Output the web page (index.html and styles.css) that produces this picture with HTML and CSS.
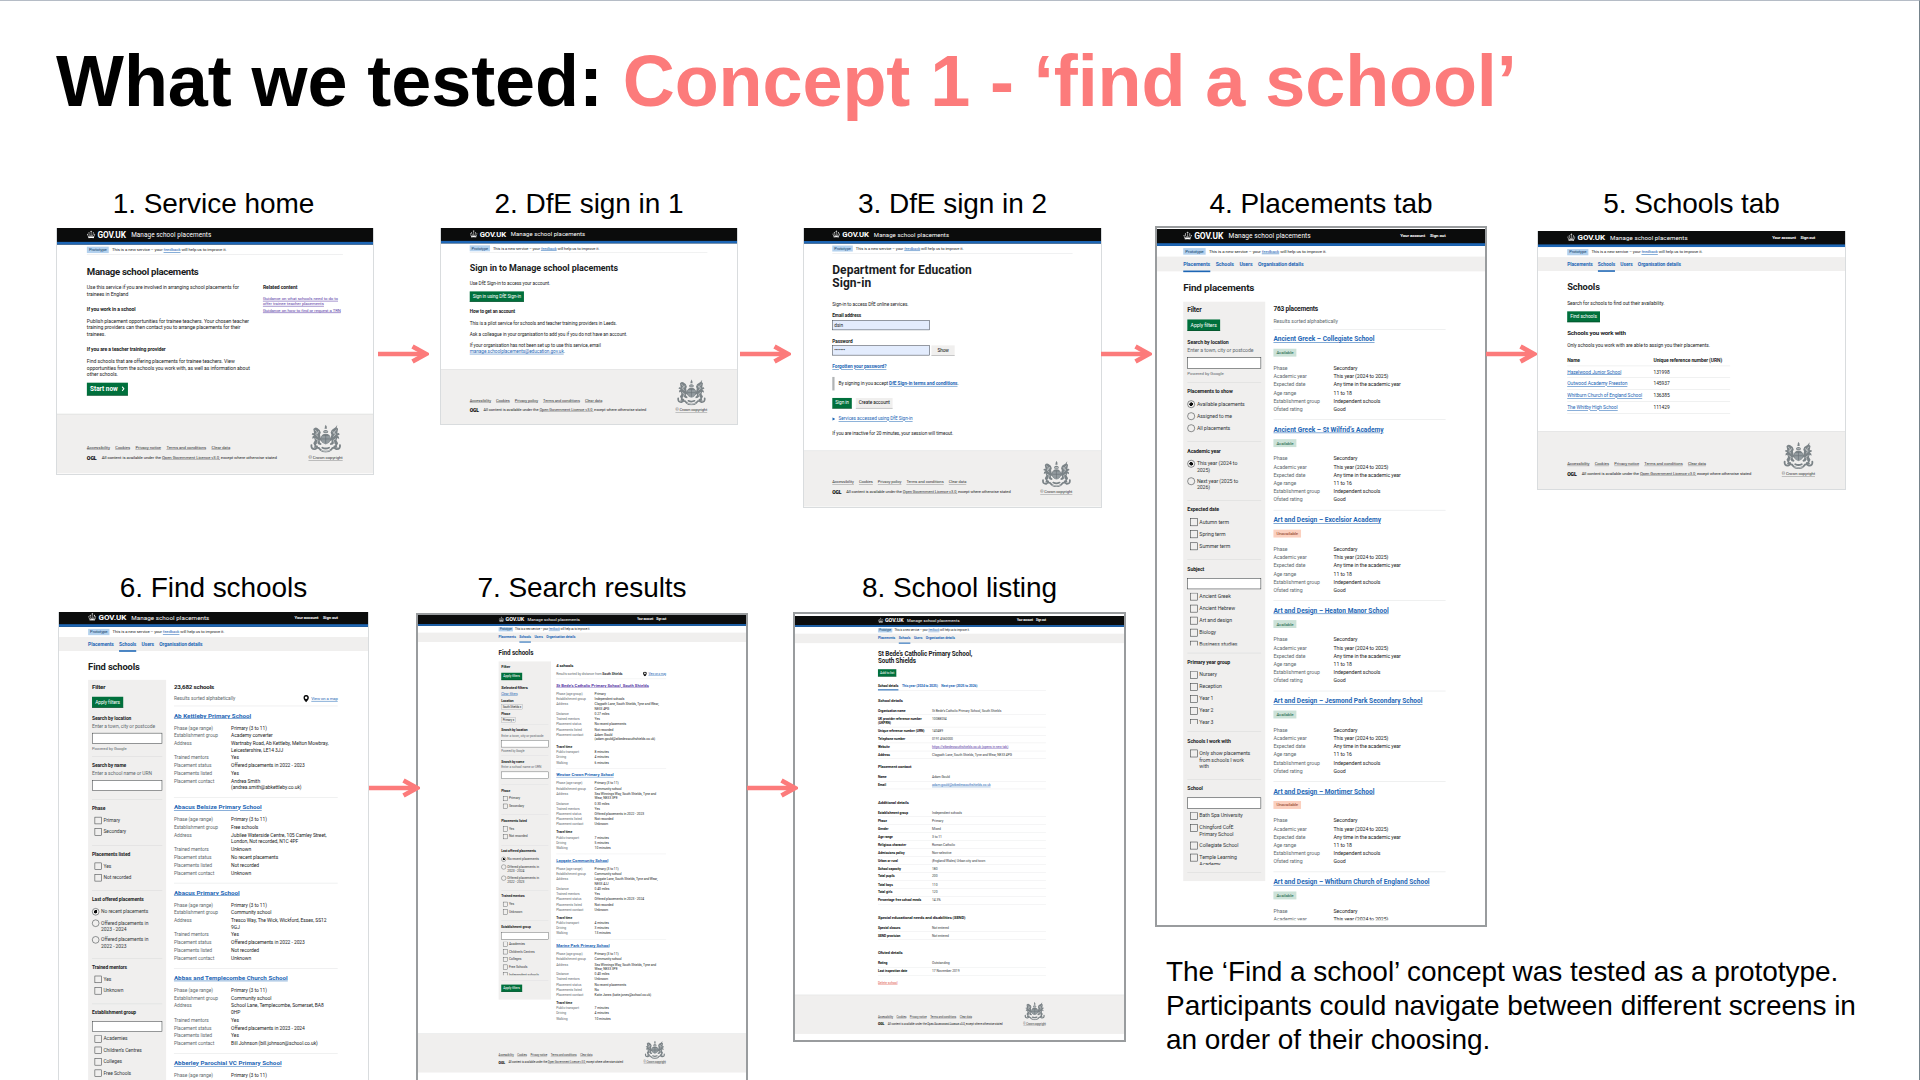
FILE: index.html
```html
<!DOCTYPE html>
<html lang="en">
<head>
<meta charset="utf-8">
<title>What we tested: Concept 1</title>
<link rel="stylesheet" href="styles.css">
</head>
<body>
<svg class="defs" aria-hidden="true">
  <symbol id="crown" viewBox="0 0 32 30">
    <g fill="#fff"><path d="M15 0h2v2.500h2.500v2H17V7h-2V4.500h-2.500v-2H15z"/><circle cx="8" cy="9" r="2"/><circle cx="24" cy="9" r="2"/><circle cx="2.600" cy="14.500" r="2"/><circle cx="29.400" cy="14.500" r="2"/>
    <path d="M16 7v14M8 11v5l5 4M24 11v5l-5 4M3 17l3 7M29 17l-3 7M5 23q11-3 22 0" fill="none" stroke="#fff" stroke-width="2"/><path d="M5 24.500q11-3 22 0l-.8 4.500q-10.200-1.500-20.400 0z"/></g>
  </symbol>
  <symbol id="crest" viewBox="0 0 125 104">
    <g fill="#7b8387">
      <path d="M53 24q9-10 19 0l-2 7H55z"/><path d="M58 15l2-9 3-3 3 3 1 9z"/><rect x="61.500" y="0" width="2.500" height="8"/>
      <path d="M16 16q7-9 15-4l9 7 4 10-3 8 3 12 6 6-1 7-9-4 1 8 6 5-2 5-9-2-5-6-5 7 5 7-3 4H17l4-7-5-10 6-11-3-9-7 3 1-8 6-4-9-4 3-5 6 1z"/>
      <path d="M109 15q-7-8-15-2l-9 6-4 10 3 8-3 12-6 6 1 7 9-4-1 8-6 5 2 5 9-2 5-6 5 7-5 7 3 4h11l-4-7 5-10-6-11 3-9 7 4-1-8-6-4 9-5-3-5-6 1z"/>
      <path d="M98 11l8-10-3 13z"/>
      <circle cx="62.500" cy="52" r="19"/>
    </g>
    <path d="M47 42h31v20q-5 10-15.500 12Q52 72 47 62z" fill="#929a9e"/>
    <path d="M62.500 38v32M48 53h29" stroke="#697277" stroke-width="2.500"/>
    <g fill="none" stroke="#7b8387" stroke-width="7" stroke-linecap="round">
      <path d="M9 76q-2 16 13 15 8-2 8-10M116 76q2 16-13 15-8-2-8-10M32 86q6 0 10 7 8 8 20.500 8T83 93q4-7 10-7M50 86q12 6 25 0"/>
    </g>
    <g fill="none" stroke="#e4e6e6" stroke-width="2.200">
      <path d="M22 19l9 8-6 9 9 8M24 52l10 6-4 11M103 19l-9 8 6 9-9 8M101 52l-10 6 4 11M57 26h12M36 24l-6 12M89 24l6 12M45 96q17 9 35 0"/>
    </g>
  </symbol>
  <symbol id="pin" viewBox="0 0 24 30"><path fill="#0b0c0c" fill-rule="evenodd" d="M12 0C5 0 1 5 1 11c0 7 7 13 11 19 4-6 11-12 11-19C23 5 19 0 12 0zm0 6a5 5 0 110 10 5 5 0 010-10z"/></symbol>
  <symbol id="arrow" viewBox="0 0 52 20" preserveAspectRatio="xMaxYMid slice"><path d="M0 10h48" stroke="#fc7b7b" stroke-width="4.700"/><path d="M35.500 2.500L49 10l-13.500 7.500" fill="none" stroke="#fc7b7b" stroke-width="4.700"/></symbol>
</svg>

<main class="slide">
<h1 class="title">What we tested: <span>Concept 1 - ‘find a school’</span></h1>

<figure class="node n1"><figcaption>1. Service home</figcaption>
<div class="shot"><div class="page">
  <div class="top"><svg><use href="#crown"/></svg><b>GOV.UK</b><span>Manage school placements</span></div>
  <div class="phase ruled"><i>Prototype</i><span>This is a new service – your <a>feedback</a> will help us to improve it.</span></div>
  <div class="main home">
    <div>
      <h2 class="xl">Manage school placements</h2>
      <p class="lead">Use this service if you are involved in arranging school placements for<br>trainees in England</p>
      <h4>If you work in a school</h4>
      <p>Publish placement opportunities for trainee teachers. Your chosen teacher<br>training providers can then contact you to arrange placements for their<br>trainees.</p>
      <h4>If you are a teacher training provider</h4>
      <p>Find schools that are offering placements for trainee teachers. View<br>opportunities from the schools you work with, as well as information about<br>other schools.</p>
      <span class="btn start">Start now <svg viewBox="0 0 12 20"><path d="M2 2l7 8-7 8" fill="none" stroke="#fff" stroke-width="4"/></svg></span>
    </div>
    <aside><h4>Related content</h4><a>Guidance on what schools need to do to<br>offer trainee teacher placements</a><a>Guidance on how to find or request a TRN</a></aside>
  </div>
  <div class="foot"><div class="meta"><p><a>Accessibility</a><a>Cookies</a><a>Privacy notice</a><a>Terms and conditions</a><a>Clear data</a></p><p class="ogl"><b>OGL</b><span>All content is available under the <u>Open Government Licence v3.0</u>, except where otherwise stated</span></p></div><div class="arms"><svg><use href="#crest"/></svg><a>© Crown copyright</a></div></div>
</div></div></figure>

<figure class="node n2"><figcaption>2. DfE sign in 1</figcaption>
<div class="shot"><div class="page">
  <div class="top"><svg><use href="#crown"/></svg><b>GOV.UK</b><span>Manage school placements</span></div>
  <div class="phase ruled"><i>Prototype</i><span>This is a new service – your <a>feedback</a> will help us to improve it.</span></div>
  <div class="main signin">
    <h2 class="xl">Sign in to Manage school placements</h2>
    <p>Use DfE Sign-in to access your account.</p>
    <span class="btn">Sign in using DfE Sign-in</span>
    <h4>How to get an account</h4>
    <p>This is a pilot service for schools and teacher training providers in Leeds.</p>
    <p>Ask a colleague in your organisation to add you if you do not have an account.</p>
    <p>If your organisation has not been set up to use this service, email<br><a>manage.schoolplacements@education.gov.uk</a>.</p>
  </div>
  <div class="foot"><div class="meta"><p><a>Accessibility</a><a>Cookies</a><a>Privacy policy</a><a>Terms and conditions</a><a>Clear data</a></p><p class="ogl"><b>OGL</b><span>All content is available under the <u>Open Government Licence v3.0</u>, except where otherwise stated</span></p></div><div class="arms"><svg><use href="#crest"/></svg><a>© Crown copyright</a></div></div>
</div></div></figure>

<figure class="node n3"><figcaption>3. DfE sign in 2</figcaption>
<div class="shot"><div class="page">
  <div class="top"><svg><use href="#crown"/></svg><b>GOV.UK</b><span>Manage school placements</span></div>
  <div class="phase ruled"><i>Prototype</i><span>This is a new service – your <a>feedback</a> will help us to improve it.</span></div>
  <div class="main dfe">
    <h2 class="xxl">Department for Education<br>Sign-in</h2>
    <p>Sign-in to access DfE online services.</p>
    <h4>Email address</h4>
    <div class="field"><span class="filled">dsin</span></div>
    <h4>Password</h4>
    <div class="field"><span class="filled">•••••••</span><span class="btn grey">Show</span></div>
    <p class="forgot"><a>Forgotten your password?</a></p>
    <p class="inset">By signing in you accept <a>DfE Sign-in terms and conditions</a>.</p>
    <div class="pair"><span class="btn">Sign in</span><span class="btn grey">Create account</span></div>
    <p class="more"><svg viewBox="0 0 12 14"><path d="M0 0l12 7-12 7z" fill="#1d66b5"/></svg><a>Services accessed using DfE Sign-in</a></p>
    <p>If you are inactive for 20 minutes, your session will timeout.</p>
  </div>
  <div class="foot"><div class="meta"><p><a>Accessibility</a><a>Cookies</a><a>Privacy policy</a><a>Terms and conditions</a><a>Clear data</a></p><p class="ogl"><b>OGL</b><span>All content is available under the <u>Open Government Licence v3.0</u>, except where otherwise stated</span></p></div><div class="arms"><svg><use href="#crest"/></svg><a>© Crown copyright</a></div></div>
</div></div></figure>

<figure class="node n4 framed"><figcaption>4. Placements tab</figcaption>
<div class="shot"><div class="page">
  <div class="top"><svg><use href="#crown"/></svg><b>GOV.UK</b><span>Manage school placements</span><em>Your account</em><em>Sign out</em></div>
  <div class="phase"><i>Prototype</i><span>This is a new service – your <a>feedback</a> will help us to improve it.</span></div>
  <div class="nav"><a class="on">Placements</a><a>Schools</a><a>Users</a><a>Organisation details</a></div>
  <div class="main">
    <h2 class="xl">Find placements</h2>
    <div class="cols">
      <div class="filter">
        <h3>Filter</h3><span class="btn">Apply filters</span>
        <section class="search first"><h4>Search by location</h4><p>Enter a town, city or postcode</p><div class="box"></div><small>Powered by Google</small></section>
        <section><h4>Placements to show</h4><ul class="radio"><li class="on">Available placements<li>Assigned to me<li>All placements</ul></section>
        <section><h4>Academic year</h4><ul class="radio"><li class="on">This year (2024 to<br>2025)<li>Next year (2025 to<br>2026)</ul></section>
        <section><h4>Expected date</h4><ul><li>Autumn term<li>Spring term<li>Summer term</ul></section>
        <section><h4>Subject</h4><div class="box"></div><ul class="scroll"><li>Ancient Greek<li>Ancient Hebrew<li>Art and design<li>Biology<li>Business studies</ul></section>
        <section><h4>Primary year group</h4><ul class="scroll"><li>Nursery<li>Reception<li>Year 1<li>Year 2<li>Year 3</ul></section>
        <section><h4>Schools I work with</h4><ul><li>Only show placements<br>from schools I work<br>with</ul></section>
        <section><h4>School</h4><div class="box"></div><ul class="scroll"><li>Bath Spa University<li>Chingford CofE<br>Primary School<li>Collegiate School<li>Temple Learning<br>Academy</ul></section>
      </div>
      <div class="results">
        <h3>763 placements</h3><p class="sort">Results sorted alphabetically</p>
        <article><h5>Ancient Greek – Collegiate School</h5><i class="tag">Available</i><dl><dt>Phase<dd>Secondary<dt>Academic year<dd>This year (2024 to 2025)<dt>Expected date<dd>Any time in the academic year<dt>Age range<dd>11 to 18<dt>Establishment group<dd>Independent schools<dt>Ofsted rating<dd>Good</dl></article>
        <article><h5>Ancient Greek – St Wilfrid’s Academy</h5><i class="tag">Available</i><dl><dt>Phase<dd>Secondary<dt>Academic year<dd>This year (2024 to 2025)<dt>Expected date<dd>Any time in the academic year<dt>Age range<dd>11 to 16<dt>Establishment group<dd>Independent schools<dt>Ofsted rating<dd>Good</dl></article>
        <article><h5>Art and Design – Excelsior Academy</h5><i class="tag no">Unavailable</i><dl><dt>Phase<dd>Secondary<dt>Academic year<dd>This year (2024 to 2025)<dt>Expected date<dd>Any time in the academic year<dt>Age range<dd>11 to 18<dt>Establishment group<dd>Independent schools<dt>Ofsted rating<dd>Good</dl></article>
        <article><h5>Art and Design – Heaton Manor School</h5><i class="tag">Available</i><dl><dt>Phase<dd>Secondary<dt>Academic year<dd>This year (2024 to 2025)<dt>Expected date<dd>Any time in the academic year<dt>Age range<dd>11 to 18<dt>Establishment group<dd>Independent schools<dt>Ofsted rating<dd>Good</dl></article>
        <article><h5>Art and Design – Jesmond Park Secondary School</h5><i class="tag">Available</i><dl><dt>Phase<dd>Secondary<dt>Academic year<dd>This year (2024 to 2025)<dt>Expected date<dd>Any time in the academic year<dt>Age range<dd>11 to 16<dt>Establishment group<dd>Independent schools<dt>Ofsted rating<dd>Good</dl></article>
        <article><h5>Art and Design – Mortimer School</h5><i class="tag no">Unavailable</i><dl><dt>Phase<dd>Secondary<dt>Academic year<dd>This year (2024 to 2025)<dt>Expected date<dd>Any time in the academic year<dt>Age range<dd>11 to 18<dt>Establishment group<dd>Independent schools<dt>Ofsted rating<dd>Good</dl></article>
        <article><h5>Art and Design – Whitburn Church of England School</h5><i class="tag">Available</i><dl><dt>Phase<dd>Secondary<dt>Academic year<dd>This year (2024 to 2025)</dl></article>
      </div>
    </div>
  </div>
</div></div></figure>

<figure class="node n5"><figcaption>5. Schools tab</figcaption>
<div class="shot"><div class="page">
  <div class="top"><svg><use href="#crown"/></svg><b>GOV.UK</b><span>Manage school placements</span><em>Your account</em><em>Sign out</em></div>
  <div class="phase"><i>Prototype</i><span>This is a new service – your <a>feedback</a> will help us to improve it.</span></div>
  <div class="nav"><a>Placements</a><a class="on">Schools</a><a>Users</a><a>Organisation details</a></div>
  <div class="main schools">
    <h2 class="xl">Schools</h2>
    <p>Search for schools to find out their availability.</p>
    <span class="btn">Find schools</span>
    <h3>Schools you work with</h3>
    <p>Only schools you work with are able to assign you their placements.</p>
    <dl class="table"><dt>Name<dd>Unique reference number (URN)<dt><a>Hazelwood Junior School</a><dd>131998<dt><a>Outwood Academy Freeston</a><dd>145937<dt><a>Whitburn Church of England School</a><dd>136385<dt><a>The Whitby High School</a><dd>111429</dl>
  </div>
  <div class="foot"><div class="meta"><p><a>Accessibility</a><a>Cookies</a><a>Privacy notice</a><a>Terms and conditions</a><a>Clear data</a></p><p class="ogl"><b>OGL</b><span>All content is available under the <u>Open Government Licence v3.0</u>, except where otherwise stated</span></p></div><div class="arms"><svg><use href="#crest"/></svg><a>© Crown copyright</a></div></div>
</div></div></figure>

<figure class="node n6"><figcaption>6. Find schools</figcaption>
<div class="shot"><div class="page">
  <div class="top"><svg><use href="#crown"/></svg><b>GOV.UK</b><span>Manage school placements</span><em>Your account</em><em>Sign out</em></div>
  <div class="phase"><i>Prototype</i><span>This is a new service – your <a>feedback</a> will help us to improve it.</span></div>
  <div class="nav"><a>Placements</a><a class="on">Schools</a><a>Users</a><a>Organisation details</a></div>
  <div class="main">
    <h2 class="xl">Find schools</h2>
    <div class="cols">
      <div class="filter">
        <h3>Filter</h3><span class="btn">Apply filters</span>
        <section class="search first"><h4>Search by location</h4><p>Enter a town, city or postcode</p><div class="box"></div><small>Powered by Google</small></section>
        <section class="search"><h4>Search by name</h4><p>Enter a school name or URN</p><div class="box"></div></section>
        <section><h4>Phase</h4><ul><li>Primary<li>Secondary</ul></section>
        <section><h4>Placements listed</h4><ul><li>Yes<li>Not recorded</ul></section>
        <section><h4>Last offered placements</h4><ul class="radio"><li class="on">No recent placements<li>Offered placements in<br>2023 - 2024<li>Offered placements in<br>2022 - 2023</ul></section>
        <section><h4>Trained mentors</h4><ul><li>Yes<li>Unknown</ul></section>
        <section><h4>Establishment group</h4><div class="box"></div><ul class="scroll"><li>Academies<li>Children’s Centres<li>Colleges<li>Free Schools</ul></section>
      </div>
      <div class="results">
        <h3>23,682 schools</h3><p class="sort">Results sorted alphabetically<span class="map"><svg><use href="#pin"/></svg><a>View on a map</a></span></p>
        <article><h5>Ab Kettleby Primary School</h5><dl><dt>Phase (age range)<dd>Primary (3 to 11)<dt>Establishment group<dd>Academy converter<dt>Address<dd>Wartnaby Road, Ab Kettleby, Melton Mowbray,<br>Leicestershire, LE14 3JJ<dt>Trained mentors<dd>Yes<dt>Placement status<dd>Offered placements in 2022 - 2023<dt>Placements listed<dd>Yes<dt>Placement contact<dd>Andrea Smith<br>(andrea.smith@abkettleby.co.uk)</dl></article>
        <article><h5>Abacus Belsize Primary School</h5><dl><dt>Phase (age range)<dd>Primary (3 to 11)<dt>Establishment group<dd>Free schools<dt>Address<dd>Jubilee Waterside Centre, 105 Camley Street,<br>London, Not recorded, N1C 4PF<dt>Trained mentors<dd>Unknown<dt>Placement status<dd>No recent placements<dt>Placements listed<dd>Not recorded<dt>Placement contact<dd>Unknown</dl></article>
        <article><h5>Abacus Primary School</h5><dl><dt>Phase (age range)<dd>Primary (3 to 11)<dt>Establishment group<dd>Community school<dt>Address<dd>Tresco Way, The Wick, Wickford, Essex, SS12<br>9GJ<dt>Trained mentors<dd>Yes<dt>Placement status<dd>Offered placements in 2022 - 2023<dt>Placements listed<dd>Not recorded<dt>Placement contact<dd>Unknown</dl></article>
        <article><h5>Abbas and Templecombe Church School</h5><dl><dt>Phase (age range)<dd>Primary (3 to 11)<dt>Establishment group<dd>Community school<dt>Address<dd>School Lane, Templecombe, Somerset, BA8<br>0HP<dt>Trained mentors<dd>Yes<dt>Placement status<dd>Offered placements in 2023 - 2024<dt>Placements listed<dd>Yes<dt>Placement contact<dd>Bill Johnson (bill.johnson@school.co.uk)</dl></article>
        <article><h5>Abberley Parochial VC Primary School</h5><dl><dt>Phase (age range)<dd>Primary (3 to 11)</dl></article>
      </div>
    </div>
  </div>
</div></div></figure>

<figure class="node n7 framed"><figcaption>7. Search results</figcaption>
<div class="shot"><div class="page">
  <div class="top"><svg><use href="#crown"/></svg><b>GOV.UK</b><span>Manage school placements</span><em>Your account</em><em>Sign out</em></div>
  <div class="phase"><i>Prototype</i><span>This is a new service – your <a>feedback</a> will help us to improve it.</span></div>
  <div class="nav"><a>Placements</a><a class="on">Schools</a><a>Users</a><a>Organisation details</a></div>
  <div class="main">
    <h2 class="xl">Find schools</h2>
    <div class="cols">
      <div class="filter">
        <h3>Filter</h3><span class="btn">Apply filters</span>
        <div class="chosen"><h3>Selected filters</h3><a>Clear filters</a><h4>Location</h4><span>South Shields ×</span><h4>Phase</h4><span>Primary ×</span></div>
        <section class="search"><h4>Search by location</h4><p>Enter a town, city or postcode</p><div class="box"></div><small>Powered by Google</small></section>
        <section class="search"><h4>Search by name</h4><p>Enter a school name or URN</p><div class="box"></div></section>
        <section><h4>Phase</h4><ul><li>Primary<li>Secondary</ul></section>
        <section><h4>Placements listed</h4><ul><li>Yes<li>Not recorded</ul></section>
        <section><h4>Last offered placements</h4><ul class="radio"><li class="on">No recent placements<li>Offered placements in<br>2023 - 2024<li>Offered placements in<br>2022 - 2023</ul></section>
        <section><h4>Trained mentors</h4><ul><li>Yes<li>Unknown</ul></section>
        <section><h4>Establishment group</h4><div class="box"></div><ul class="scroll"><li>Academies<li>Children’s Centres<li>Colleges<li>Free Schools<li>Independent schools</ul></section>
        <span class="btn last">Apply filters</span>
      </div>
      <div class="results">
        <h3>4 schools</h3><p class="sort">Results sorted by distance from <b>South Shields</b><span class="map"><svg><use href="#pin"/></svg><a>View on a map</a></span></p>
        <article><h5 class="seen">St Bede’s Catholic Primary School, South Shields</h5><dl><dt>Phase (age group)<dd>Primary<dt>Establishment group<dd>Independent schools<dt>Address<dd>Claypath Lane, South Shields, Tyne and Wear,<br>NE33 4PG<dt>Distance<dd>0.27 miles<dt>Trained mentors<dd>Yes<dt>Placement status<dd>No recent placements<dt>Placements listed<dd>Not recorded<dt>Placement contact<dd>Adam Gould<br>(adam.gould@stbedessouthshields.co.uk)</dl><h4>Travel time</h4><dl><dt>Public transport<dd>8 minutes<dt>Driving<dd>4 minutes<dt>Walking<dd>6 minutes</dl></article>
        <article><h5>Westoe Crown Primary School</h5><dl><dt>Phase (age range)<dd>Primary (3 to 11)<dt>Establishment group<dd>Community school<dt>Address<dd>Sea Winnings Way, South Shields, Tyne and<br>Wear, NE33 3PE<dt>Distance<dd>0.30 miles<dt>Trained mentors<dd>Yes<dt>Placement status<dd>Offered placements in 2022 - 2023<dt>Placements listed<dd>Not recorded<dt>Placement contact<dd>Unknown</dl><h4>Travel time</h4><dl><dt>Public transport<dd>7 minutes<dt>Driving<dd>5 minutes<dt>Walking<dd>10 minutes</dl></article>
        <article><h5>Laygate Community School</h5><dl><dt>Phase (age range)<dd>Primary (3 to 11)<dt>Establishment group<dd>Community school<dt>Address<dd>Laygate Lane, South Shields, Tyne and Wear,<br>NE33 4JJ<dt>Distance<dd>0.40 miles<dt>Trained mentors<dd>Yes<dt>Placement status<dd>Offered placements in 2023 - 2024<dt>Placements listed<dd>Not recorded<dt>Placement contact<dd>Unknown</dl><h4>Travel time</h4><dl><dt>Public transport<dd>4 minutes<dt>Driving<dd>3 minutes<dt>Walking<dd>13 minutes</dl></article>
        <article><h5>Marine Park Primary School</h5><dl><dt>Phase (age group)<dd>Primary (3 to 11)<dt>Establishment group<dd>Community school<dt>Address<dd>Sea Winnings Way, South Shields, Tyne and<br>Wear, NE33 3PE<dt>Distance<dd>0.40 miles<dt>Trained mentors<dd>Unknown<dt>Placement status<dd>No recent placements<dt>Placements listed<dd>No<dt>Placement contact<dd>Katie Jones (katie.jones@school.co.uk)</dl><h4>Travel time</h4><dl><dt>Public transport<dd>7 minutes<dt>Driving<dd>4 minutes<dt>Walking<dd>10 minutes</dl></article>
      </div>
    </div>
  </div>
  <div class="foot"><div class="meta"><p><a>Accessibility</a><a>Cookies</a><a>Privacy notice</a><a>Terms and conditions</a><a>Clear data</a></p><p class="ogl"><b>OGL</b><span>All content is available under the <u>Open Government Licence v3.0</u>, except where otherwise stated</span></p></div><div class="arms"><svg><use href="#crest"/></svg><a>© Crown copyright</a></div></div>
</div></div></figure>

<figure class="node n8 framed"><figcaption>8. School listing</figcaption>
<div class="shot"><div class="page">
  <div class="top"><svg><use href="#crown"/></svg><b>GOV.UK</b><span>Manage school placements</span><em>Your account</em><em>Sign out</em></div>
  <div class="phase"><i>Prototype</i><span>This is a new service – your <a>feedback</a> will help us to improve it.</span></div>
  <div class="nav"><a>Placements</a><a class="on">Schools</a><a>Users</a><a>Organisation details</a></div>
  <div class="main listing">
    <h2 class="xl">St Bede’s Catholic Primary School,<br>South Shields</h2>
    <span class="btn">Add to list</span>
    <div class="tabs"><a class="on">School details</a><a>This year (2024 to 2025)</a><a>Next year (2025 to 2026)</a></div>
    <h3>School details</h3>
    <dl class="sum"><dt>Organisation name<dd>St Bede’s Catholic Primary School, South Shields<dt>UK provider reference number<br>(UKPRN)<dd>10088034<dt>Unique reference number (URN)<dd>140489<dt>Telephone number<dd>0191 4560000<dt>Website<dd><a class="seen">https://stbedessouthshields.co.uk (opens in new tab)</a><dt>Address<dd>Claypath Lane, South Shields, Tyne and Wear, NE33 4PG</dl>
    <h3>Placement contact</h3>
    <dl class="sum"><dt>Name<dd>Adam Gould<dt>Email<dd><a>adam.gould@stbedessouthshields.co.uk</a></dl>
    <h3 class="gap">Additional details</h3>
    <dl class="sum"><dt>Establishment group<dd>Independent schools<dt>Phase<dd>Primary<dt>Gender<dd>Mixed<dt>Age range<dd>3 to 11<dt>Religious character<dd>Roman Catholic<dt>Admissions policy<dd>Non-selective<dt>Urban or rural<dd>(England/Wales) Urban city and town<dt>School capacity<dd>180<dt>Total pupils<dd>200<dt>Total boys<dd>110<dt>Total girls<dd>120<dt>Percentage free school meals<dd>14.3%</dl>
    <h3 class="gap">Special educational needs and disabilities (SEND)</h3>
    <dl class="sum"><dt>Special classes<dd>Not entered<dt>SEND provision<dd>Not entered</dl>
    <h3 class="gap">Ofsted details</h3>
    <dl class="sum"><dt>Rating<dd>Outstanding<dt>Last inspection date<dd>17 November 2019</dl>
    <p class="delete"><a>Delete school</a></p>
  </div>
  <div class="foot"><div class="meta"><p><a>Accessibility</a><a>Cookies</a><a>Privacy notice</a><a>Terms and conditions</a><a>Clear data</a></p><p class="ogl"><b>OGL</b><span>All content is available under the <u>Open Government Licence v3.0</u>, except where otherwise stated</span></p></div><div class="arms"><svg><use href="#crest"/></svg><a>© Crown copyright</a></div></div>
</div></div></figure>

<svg class="arrow a1"><use href="#arrow"/></svg>
<svg class="arrow a2"><use href="#arrow"/></svg>
<svg class="arrow a3"><use href="#arrow"/></svg>
<svg class="arrow a4"><use href="#arrow"/></svg>
<svg class="arrow a5"><use href="#arrow"/></svg>
<svg class="arrow a6"><use href="#arrow"/></svg>

<p class="note">The ‘Find a school’ concept was tested as a prototype.<br>Participants could navigate between different screens in<br>an order of their choosing.</p>
</main>
</body>
</html>
```
FILE: styles.css
```css
* { box-sizing: border-box; margin: 0; padding: 0; }
body { width: 1920px; height: 1080px; overflow: hidden; background: #fff; color: #000; font-family: "Liberation Sans", Arial, sans-serif; }
.defs { display: none; }
.slide { position: relative; width: 1920px; height: 1080px; overflow: hidden; border-top: 1px solid #b5bcc6; border-right: 1px solid #75838b; }
.title { padding: 39px 0 0 56px; font-size: 72px; line-height: 82px; font-weight: 700; letter-spacing: -.08px; white-space: nowrap; }
.title span { color: #fc7b7b; }
.note { position: absolute; left: 1166px; top: 954px; font-size: 28px; line-height: 34px; letter-spacing: -.04px; white-space: nowrap; }

/* Flow diagram: screens and the arrows that join them */
.node { position: absolute; top: 187px; width: var(--w); }
.node figcaption { height: var(--cap, 40px); font-size: 28px; line-height: 32px; letter-spacing: -.06px; text-align: center; white-space: nowrap; }
.shot { width: var(--w); height: var(--h); overflow: hidden; background: #fff; border: 1px solid #d9dcde; border-top: 0; }
.framed .shot { border: 2px solid #999c9e; background: #fff; }
.n1 { --w: 318px; --h: 247px; --s: .2667; --pad: 112px; left: 56px; }
.n1 figcaption { text-indent: -3px; }
.n2 { --w: 298px; --h: 197px; --s: .2476; --pad: 116px; left: 440px; }
.n3 { --w: 299px; --h: 280px; --s: .2503; --pad: 113px; left: 803px; }
.n4 { --w: 332px; --h: 701px; --s: .2733; --pad: 96px; --cap: 38px; left: 1155px; }
.n5 { --w: 309px; --h: 259px; --s: .2583; --pad: 113px; --cap: 43px; left: 1537px; }
.n6 { --w: 311px; --h: 480px; --s: .26; --pad: 112px; left: 58px; top: 571px; }
.n7 { --w: 332px; --h: 480px; --s: .1745; --pad: 462px; --cap: 41px; left: 416px; top: 571px; }
.n8 { --w: 333px; --h: 430px; --s: .175; --pad: 474px; left: 793px; top: 571px; }
.n4 .shot { padding-top: 1px; }
.n4 .page { height: 2529px; overflow: hidden; }
.n8 .shot { padding-top: 2px; }
.arrow { position: absolute; width: 51px; height: 20px; top: 343px; }
.a1 { left: 378px; }
.a2 { left: 740px; }
.a3 { left: 1101px; }
.a4 { left: 1486px; }
.a5 { left: 369px; top: 777px; }
.a6 { left: 747px; top: 777px; }

/* Service pages, drawn at their own size and scaled down */
.page { width: calc(var(--w) / var(--s)); transform: scale(var(--s)); transform-origin: 0 0; background: #fff; color: #1a1c1d; font: 19px/25px Roboto, "Liberation Sans", sans-serif; letter-spacing: -.013em; white-space: nowrap; }
.page a { color: #1d66b5; text-decoration: underline; text-decoration-thickness: 1.5px; text-underline-offset: 3px; }
.top, .phase, .nav, .main, .foot { padding-left: var(--pad); padding-right: calc(var(--w) / var(--s) - var(--pad) - 960px); }
.top { display: flex; align-items: flex-end; height: var(--bar, 62px); background: #0b0c0c; border-bottom: 10px solid #1d66b5; color: #fff; }
.n6 .top { --bar: 57px; overflow: hidden; }
.top svg { width: 32px; height: 30px; margin: 0 8px 13px 0; }
.top b { width: 126px; font-size: 31px; line-height: 36px; padding-bottom: 8px; letter-spacing: -.01em; }
.top span { flex: 1; font-size: 24px; line-height: 36px; padding-bottom: 8px; letter-spacing: .01em; }
.top em { margin-left: 18px; font-size: 16px; font-style: normal; font-weight: 700; line-height: 36px; padding-bottom: 9px; letter-spacing: -.02em; }
.phase { display: flex; align-items: center; height: 39px; font-size: 16px; }
.phase i { width: 82px; margin-right: 12px; text-align: center; font-style: normal; line-height: 24px; background: #b3d1ee; color: #123c66; }
.ruled { background: linear-gradient(#c4c7c9, #c4c7c9) var(--pad) bottom / 960px 1.500px no-repeat; }
.nav { display: flex; gap: 20px; height: 54px; background: #f0efee; line-height: 54px; font-weight: 700; }
.page .nav a { text-decoration: none; }
.nav a.on { border-bottom: 6px solid #1d66b5; height: 57px; }
.xl { font-size: 36px; line-height: 40px; letter-spacing: -.014em; }
.n1 .xl { letter-spacing: -.03em; }
.n2 .xl { letter-spacing: -.005em; }
.xxl { font-size: 48px; line-height: 50px; letter-spacing: .002em; }
.page h3 { font-size: 24px; line-height: 30px; letter-spacing: -.03em; }
.page h4 { font-size: 19px; line-height: 25px; letter-spacing: -.02em; }
.btn { display: block; width: fit-content; height: 42px; padding: 0 12px; background: #00703c; border-bottom: 2px solid #00401f; color: #fff; line-height: 39px; letter-spacing: -.02em; }
.btn.grey { background: #f0efee; border-color: #9a9c9d; color: #0b0c0c; }

/* Footer */
.foot { display: flex; justify-content: space-between; height: 223px; background: #f0efee; border-top: 1.500px solid #b9bdc0; font-size: 16px; line-height: 20px; }
.foot a, .foot u { color: #303335; text-decoration-thickness: 1px; }
.meta p { display: flex; gap: 20px; padding-top: 114px; }
.meta .ogl { padding-top: 20px; gap: 14px; }
.ogl b { width: 42px; font-size: 20px; font-weight: 900; letter-spacing: -.03em; color: #0b0c0c; }
.arms { width: 130px; padding-top: 40px; text-align: center; }
.arms svg { display: block; width: 125px; height: 104px; margin: 0 auto 10px; }

/* Service home */
.home { display: flex; gap: 0; height: 596px; padding-top: 43px; }
.home > div { width: 660px; }
.home .lead { margin: 27px 0 30px; }
.home h4 + p { margin: 20px 0 31px; }
.start.btn { display: flex; align-items: center; gap: 14px; margin-top: -13px; height: 48px; font-size: 24px; font-weight: 700; letter-spacing: 0; }
.start svg { width: 12px; height: 20px; }
.home aside { padding-top: 66px; font-size: 16px; line-height: 19px; letter-spacing: -.005em; }
.page .home aside a { display: block; margin-top: 6px; color: #5a3aa6; }
.page .home aside h4 { margin-bottom: 20px; }

/* Sign in, step 1 */
.signin { height: 470px; padding-top: 42px; }
.signin p { margin-bottom: 20px; }
.signin h2 { margin-bottom: 28px; }
.signin h4 { margin: 28px 0 20px; }

/* Sign in, step 2 */
.dfe { height: 789px; padding-top: 43px; }
.dfe > p:first-of-type { margin: 50px 0 19px; }
.field { display: flex; gap: 6px; margin: 5px 0 31px; }
.filled { width: 390px; height: 40px; border: 2px solid #3c4046; background: #e3ecfd; padding: 0 6px; line-height: 38px; }
.dfe .grey { padding: 0 24px; }
.forgot, .inset a { font-weight: 700; }
.inset { margin: 28px 0 30px; padding-left: 16px; border-left: 9px solid #b1b4b6; line-height: 54px; }
.pair { display: flex; gap: 16px; }
.dfe .pair .grey { padding: 0 12px; }
.more { display: flex; align-items: center; gap: 13px; margin: 29px 0 35px; }
.more svg { width: 12px; height: 14px; }

/* Tab pages */
.nav + .main > h2 { padding-top: 40px; }
.cols { display: flex; gap: 30px; align-items: flex-start; margin-top: 31px; }
.filter { width: 300px; padding: 14px 15px 31px; background: #f0efee; }
.filter > .btn { margin-top: 21px; }
.filter > .btn.last { margin-top: 25px; margin-bottom: 13px; }
.filter section { padding: 21px 0 19px; border-bottom: 1.500px solid #c3c6c8; }
.filter section h4 { margin-bottom: 20px; }
.filter .chosen + section { padding-top: 18px; }
.filter .search h4 { margin-bottom: 5px; }
.filter .search.first { padding-top: 28px; }
.filter .search p { color: #626a6e; margin-bottom: 14px; }
.filter .search { padding-bottom: 32px; }
.filter .search:has(small) { padding-bottom: 17px; }
.n6 .filter section { padding-bottom: 20.500px; }
.n6 .filter .search { padding-bottom: 33px; }
.n6 .filter .search:has(small) { padding-bottom: 18px; }
.filter small { display: block; margin-top: 7px; font-size: 16px; color: #626a6e; }
.box { height: 41px; border: 2px solid #35393b; background: #fff; }
.box + ul { margin-top: 13px; }
.filter ul { list-style: none; }
.filter li { position: relative; min-height: 44px; padding: 0 0 14px 44px; color: #33383a; }
.filter li::before { content: ""; position: absolute; left: 10px; top: 0; width: 24px; height: 24px; border: 2px solid #35393b; }
.filter .radio li { padding-left: 35px; }
.filter .radio li::before { left: 0; border-radius: 50%; }
.radio .on::before { background: radial-gradient(#0b0c0c 0 6px, transparent 7px); }
.filter .scroll { height: 193px; overflow: hidden; margin-bottom: 8px; }
.chosen { padding: 29px 0 14px; border-bottom: 1.500px solid #c3c6c8; }
.chosen a { display: block; margin-top: 6px; }
.chosen h4 { margin-top: 19px; }
.chosen span { display: block; width: fit-content; margin-top: 6px; padding: 0 7px; border: 1.500px solid #505a5f; line-height: 28px; font-size: 16px; }
.chosen span + h4 { margin-top: 11px; }

.results { width: 630px; }
.results > h3 { margin-top: 11px; }
.sort { display: flex; align-items: center; height: 59px; padding-top: 3px; color: #626a6e; }
.sort b { color: #33383a; margin-left: 4px; }
.map { display: flex; align-items: center; gap: 8px; margin-left: auto; font-size: 16px; }
.map svg { width: 23px; height: 29px; }
article { border-top: 1.500px solid #c3c6c8; padding: 21px 0 20px; }
.n6 article { padding-bottom: 21px; }
article h5 { font-size: 24px; line-height: 30px; letter-spacing: .002em; color: #1d66b5; text-decoration: underline; text-decoration-thickness: 1.5px; text-underline-offset: 3px; }
.n7 h5 { letter-spacing: .005em; }
article h5.seen, .page a.seen { color: #5a3aa6; }
.tag { display: block; width: fit-content; height: 29px; margin: 20px 0 10px; padding: 0 11px; background: #cce2d8; color: #0d5c40; font-size: 16px; font-style: normal; line-height: 29px; }
.tag.no { background: #fbd0bf; color: #8a3418; }
article dl { display: grid; grid-template-columns: 220px 1fr; row-gap: 5px; padding: 20px 0 5px; }
article dt { color: #626a6e; }
article h4 { margin: 15px 0 5px; }
article h4 + dl { padding-top: 0; padding-bottom: 2px; }

/* Schools tab */
.schools { height: 621px; }
.schools h2 { margin-bottom: 31px; }
.schools .btn { margin: 20px 0 27px; }
.schools h3 + p { margin: 21px 0 31px; }
.table { display: grid; grid-template-columns: 334px 297px; line-height: 45px; }
.table > * { height: 46px; border-bottom: 1.500px solid #c3c6c8; }
.table > :nth-child(-n+2) { font-weight: 700; height: 36px; line-height: 25px; }

/* School listing */
.listing { height: 2010px; }
.listing h2 + .btn { margin-top: 29px; }
.tabs { display: flex; gap: 20px; margin-top: 31px; height: 49px; line-height: 49px; border-bottom: 1.500px solid #c3c6c8; font-weight: 700; }
.page .tabs a { text-decoration: none; }
.page .tabs a.on { border-bottom: 6px solid #1d66b5; color: #0b0c0c; }
.listing h3 { margin: 42px 0 21px; }
.sum + h3 { margin-top: 30px; }
.sum + h3.gap { margin-top: 61px; }
.sum { display: grid; grid-template-columns: 309px 1fr; }
.sum > * { padding: 10px 0 9.500px; border-bottom: 1.500px solid #c3c6c8; color: #33383a; }
.sum dt { font-weight: 700; color: #0b0c0c; }
.delete { margin-top: 29px; }
.page .delete a { color: #e0584a; }
.n7 .main { height: 2244px; }
```
